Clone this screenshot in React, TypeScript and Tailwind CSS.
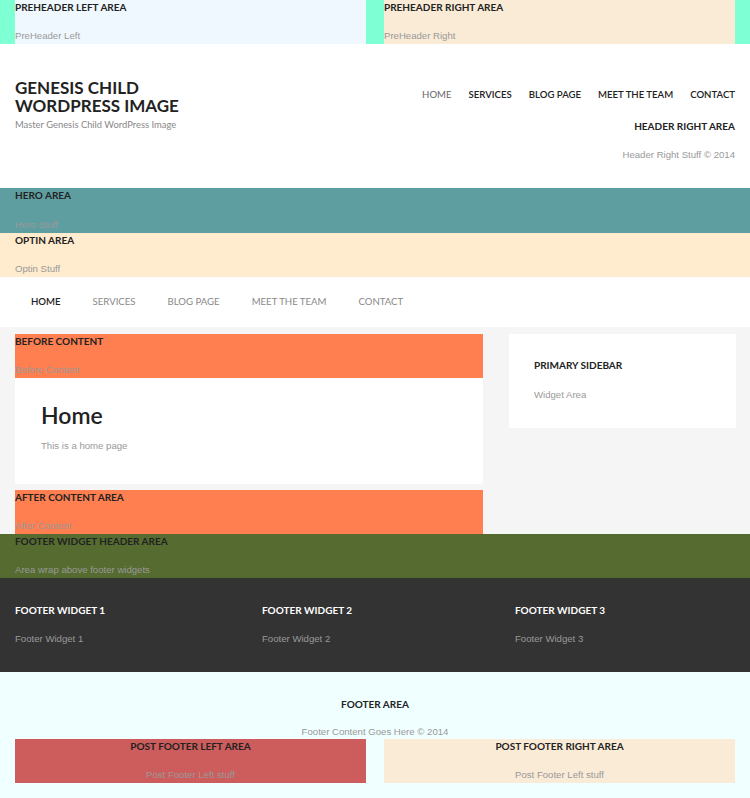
import React from "react";

const H = "font-['Lato','Open_Sans',sans-serif] font-bold uppercase text-[10px] leading-[14px] text-[#222]";
const B = "font-['Liberation_Sans','Helvetica',sans-serif] text-[9.6px] leading-[14px] text-[#999]";

function Area({ title, text, bg, className = "" }: { title: string; text: string; bg: string; className?: string }) {
  return (
    <div className={`${bg} h-[44px] flex flex-col justify-between pb-[1px] ${className}`}>
      <div className={H}>{title}</div>
      <div className={B}>{text}</div>
    </div>
  );
}

export default function App() {
  const nav1 = ["Home", "Services", "Blog Page", "Meet The Team", "Contact"];
  return (
    <div className="w-[750px] bg-white">
      {/* preheader */}
      <div className="bg-[#7fffd4] px-[15px] flex gap-[18px]">
        <Area title="Preheader Left Area" text="PreHeader Left" bg="bg-[#f0f8ff]" className="flex-1" />
        <Area title="Preheader Right Area" text="PreHeader Right" bg="bg-[#faebd7]" className="flex-1" />
      </div>

      {/* header */}
      <div className="h-[144px] px-[15px] flex justify-between">
        <div className="pt-[35px]">
          <div className="font-['Lato',sans-serif] font-bold uppercase text-[17px] leading-[18px] text-[#222]">
            Genesis Child
            <br />
            Wordpress Image
          </div>
          <div className="font-['Lato',sans-serif] text-[9.4px] leading-[14px] text-[#888] mt-[3px]">
            Master Genesis Child WordPress Image
          </div>
        </div>
        <div className="pt-[44px] flex flex-col items-end">
          <div className="flex gap-[17px] font-['Lato',sans-serif] text-[9.6px] leading-[14px] uppercase">
            {nav1.map((n, i) => (
              <span key={n} className={i === 0 ? "text-[#666]" : "text-[#222] font-semibold"}>
                {n}
              </span>
            ))}
          </div>
          <div className={`${H} mt-[17px]`}>Header Right Area</div>
          <div className={`${B} mt-[15px]`}>Header Right Stuff © 2014</div>
        </div>
      </div>

      {/* hero */}
      <Area title="Hero Area" text="Hero Stuff" bg="bg-[#5f9ea0]" className="px-[15px] h-[45px]" />
      <Area title="Optin Area" text="Optin Stuff" bg="bg-[#ffebcd]" className="px-[15px]" />

      {/* nav 2 */}
      <div className="h-[50px] px-[15px] flex items-center font-['Lato',sans-serif] text-[9.6px] uppercase">
        {nav1.map((n, i) => (
          <span key={n} className={`px-[16px] ${i === 0 ? "text-[#222] font-semibold" : "text-[#888]"}`}>
            {n}
          </span>
        ))}
      </div>

      {/* main */}
      <div className="bg-[#f5f5f5] pt-[7px] pl-[15px] pr-[14px] flex gap-[26px]">
        <div className="w-[468px] shrink-0 flex flex-col">
          <Area title="Before Content" text="Before Content" bg="bg-[#ff7f50]" />
          <div className="bg-white rounded-b-[3px] h-[106px] px-[26px] pt-[25px]">
            <h1 className="font-['Lato',sans-serif] font-semibold text-[23px] leading-[24px] text-[#222]">Home</h1>
            <p className={`${B} mt-[12px] text-[#777]`}>This is a home page</p>
          </div>
          <Area title="After Content Area" text="After Content" bg="bg-[#ff7f50]" className="mt-[6px] h-[42px]" />
        </div>
        <div className="w-[227px] shrink-0 self-start bg-white h-[94px] px-[25px] pt-[24px]">
          <div className={H}>Primary Sidebar</div>
          <div className={`${B} mt-[16px]`}>Widget Area</div>
        </div>
      </div>

      {/* footer widget header */}
      <Area title="Footer Widget Header Area" text="Area wrap above footer widgets" bg="bg-[#556b2f]" className="px-[15px]" />

      {/* footer widgets */}
      <div className="bg-[#333] h-[94px] px-[15px] pt-[25px] flex">
        {["1", "2", "3"].map((n, i) => (
          <div key={n} className={i === 0 ? "w-[247px]" : i === 1 ? "w-[253px]" : "flex-1"}>
            <div className={`${H} text-white`}>Footer Widget {n}</div>
            <div className={`${B} mt-[15px] text-[#888]`}>Footer Widget {n}</div>
          </div>
        ))}
      </div>

      {/* footer */}
      <div className="bg-[#f0ffff] h-[127px] pt-[25px] px-[15px]">
        <div className={`${H} text-center`}>Footer Area</div>
        <div className={`${B} text-center mt-[14px]`}>Footer Content Goes Here © 2014</div>
        <div className="flex gap-[18px]">
          <Area title="Post Footer Left Area" text="Post Footer Left stuff" bg="bg-[#cd5c5c]" className="flex-1 text-center h-[42px]" />
          <Area title="Post Footer Right Area" text="Post Footer Left stuff" bg="bg-[#faebd7]" className="flex-1 text-center h-[42px]" />
        </div>
      </div>
    </div>
  );
}
